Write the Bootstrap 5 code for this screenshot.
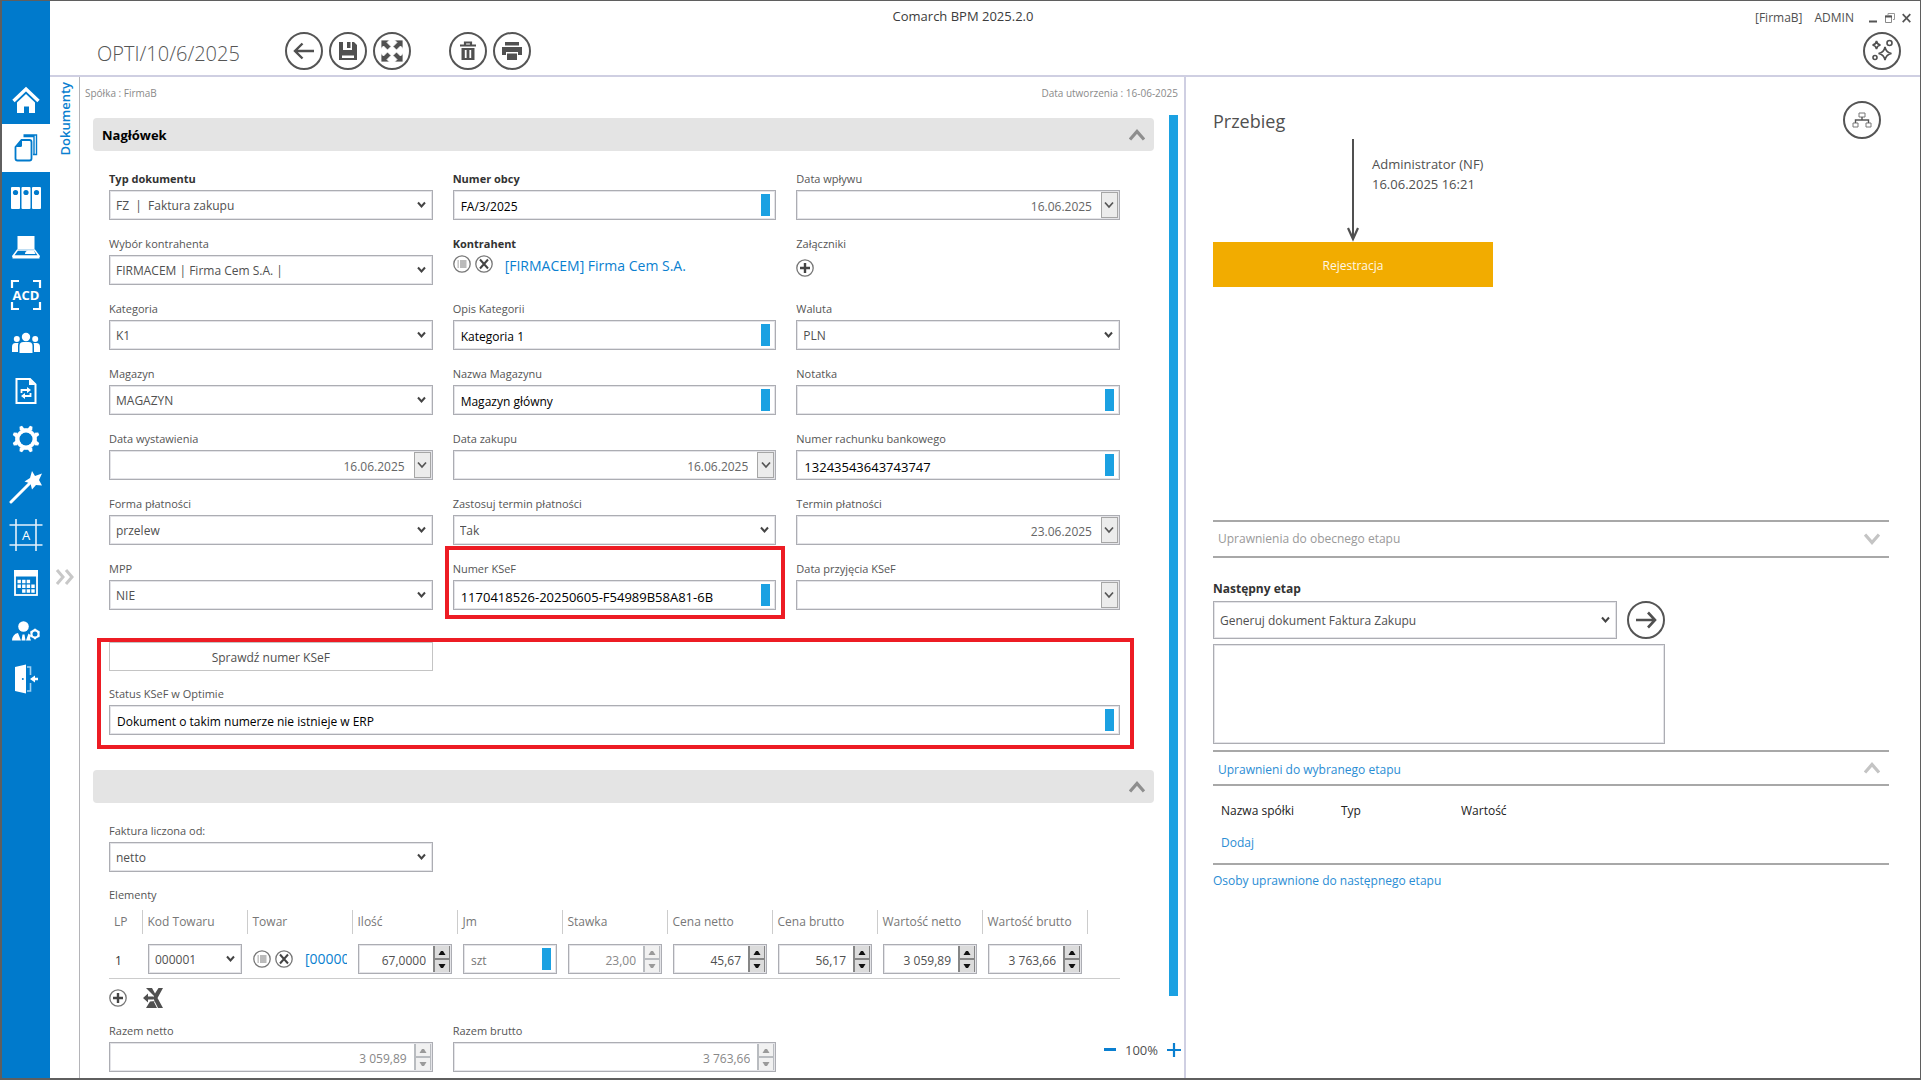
<!DOCTYPE html>
<html lang="pl">
<head>
<meta charset="utf-8">
<meta name="viewport" content="width=device-width, initial-scale=1">
<title>Comarch BPM 2025.2.0</title>
<link rel="stylesheet" href="https://cdn.jsdelivr.net/npm/bootstrap@5.3.0/dist/css/bootstrap.min.css">
<style>
  :root { --blue:#007acc; --sky:#1ba1e2; --ink:#505050; --edge:#acadb3; --rule:#cfcfe2; }
  body { font-family:"Open Sans","Noto Sans",sans-serif; font-size:12px; line-height:20px; color:var(--ink); background:#fff; }
  a { color:#2a8dd4; text-decoration:none; }
  svg { display:block; }
  .app-window { min-height:100vh; border:solid #5f5f5f; border-width:1px 1px 2px 2px; }

  /* sidebar */
  .side-nav { width:48px; background:var(--blue); padding-top:75px; }
  .side-nav a { height:48px; color:#fff; }
  .side-nav a.current { background:#fff; color:var(--blue); margin-bottom:3px; }

  /* title bar */
  .top-bar { height:76px; border-bottom:2px solid var(--rule); padding:0 9px 0 47px; }
  .app-name { padding:5px 44px 0 0; font-size:13px; color:#3c3c3c; pointer-events:none; }
  .doc-title { font-size:20px; font-weight:300; line-height:28px; color:#555; margin:0; padding-top:39px; width:188px; }
  .round-btn { width:38px; height:38px; border:2px solid #555; border-radius:50%; background:#fff; color:#505050; padding:0; display:flex; align-items:center; justify-content:center; flex:none; }
  .tool-row { padding-top:31px; gap:6px; }
  .tool-row .group-start { margin-left:32px; }
  .user-row { padding-top:7px; }
  .user-row + .round-btn { margin:4px 10px 0 auto; }
  .win-btn { border:0; background:none; padding:0; color:#555; margin-left:7px; }

  /* vertical tab strip */
  .tab-strip { width:30px; border-right:1px solid #b4b4b8; padding-top:5px; }
  .tab-strip .tab-name { writing-mode:vertical-rl; transform:rotate(180deg); color:#0a7fd0; font-size:13px; font-weight:600; }
  .tab-strip .expander { border:0; background:none; padding:0; color:#c8c8c8; margin-top:414px; }

  /* form pane */
  .form-pane { width:60%; flex:none; position:relative; }
  .flow-pane { width:40%; flex:none; border-left:2px solid var(--rule); padding:0 31px 0 27px; }
  .info-line { font-size:10px; color:#8a8a8a; padding:6px 6px 0 5px; }
  .form-scroll { padding-left:13px; }
  .section-head { height:33px; background:#e4e4e4; border:0; border-radius:4px; padding:0 9px; width:100%; color:#000; font-size:13px; font-weight:700; margin-top:7px; }
  .section-head svg { color:#8e8e8e; }
  .section-next { margin-top:35px; }
  .section-body { padding:18px 34px 0 16px; }
  .field-grid { display:grid; grid-template-columns:repeat(3,minmax(0,1fr)); column-gap:20px; row-gap:14px; }
  .fld { min-width:0; position:relative; }
  .fld > label, .cap { display:block; height:21px; line-height:20px; color:#555; font-size:11px; }
  .fld.req > label, .fld.req > .cap { font-weight:700; color:#333; }
  .box { height:30px; width:100%; border:1px solid var(--edge); border-radius:0; background-color:#fff; color:var(--ink); font-size:12px; line-height:20px; padding:0 6px; outline:1px solid #e4e4e8; outline-offset:-2px; }
  select.box { appearance:none; padding:1px 6px 0; background:#fff url("data:image/svg+xml,%3Csvg xmlns='http://www.w3.org/2000/svg' width='9' height='8'%3E%3Cpath d='M1 1.5l3.500 4 3.500-4' fill='none' stroke='%23444' stroke-width='2'/%3E%3C/svg%3E") no-repeat right 6px center; }
  .txt { position:relative; }
  .txt .box { color:#000; padding:3px 20px 0 7px; }
  .txt .box.digits { font-size:13px; }
  .txt::after { content:""; position:absolute; right:6px; top:4px; width:9px; height:22px; background:var(--sky); }
  .txt.dim .box { color:#777; }
  .date-box { display:flex; border:1px solid var(--edge); height:30px; padding:1px; outline:1px solid #e4e4e8; outline-offset:-2px; }
  .date-box input { flex:1; min-width:0; border:0; text-align:right; color:#666; padding:3px 9px 0 6px; font-size:12px; background:none; }
  .date-box button { width:17px; border:1px solid #a6a6a6; background:#ececec; padding:0; color:#555; display:flex; align-items:center; justify-content:center; }
  .num-box { display:flex; border:1px solid var(--edge); height:30px; outline:1px solid #e4e4e8; outline-offset:-2px; }
  .num-box input { flex:1; min-width:0; width:0; border:0; text-align:right; color:var(--ink); padding:3px 7px 0 0; font-size:12px; background:none; }
  .num-box span { width:18px; display:flex; flex-direction:column; background:#868686; padding:1px 2px; gap:2px; }
  .num-box button { flex:1; border:0; background:#dcdcdc; padding:0; color:#111; display:flex; align-items:center; justify-content:center; }
  .num-box.off span { background:#b9bcc0; }
  .num-box.off button { background:#f1f1f1; color:#9a9a9a; }
  .num-box.off input { color:#888; }
  .mini { border:0; background:none; padding:0; color:#777; }
  .fld.req > .cap.near { height:18px; }
  .cp-link { color:#0a7fd0; font-size:14px; font-weight:500; white-space:nowrap; overflow:hidden; }
  .frame-red { position:absolute; border:4px solid #ed1c24; pointer-events:none; }
  .frame-a { inset:-13px -9px -9px -8px; }
  .frame-b { inset:-4px -14px -14px -12px; }
  .check-btn { height:29px; border:1px solid #c4c4c4; background:#fff; color:var(--ink); padding:3px 0 0; width:100%; font-size:12px; }
  .status-block { position:relative; margin-top:32px; }
  .status-block .fld { margin-top:13px; }

  .lines-table { width:100%; table-layout:fixed; border-collapse:collapse; border-bottom:1px solid #ccc; }
  .lines-table th { font-weight:400; color:#777; height:24px; padding:0 0 0 5px; border-right:1px solid #ccc; white-space:nowrap; }
  .lines-table th:last-child { border:0; }
  .lines-table td { padding:10px 5px 4px 6px; height:44px; }
  .lines-table td.lp { color:#333; padding-top:14px; }
  .list-cap { padding-top:13px; }
  .row-tools { margin-top:9px; }
  .totals { margin-top:13px; }
  .scroll-bar { width:9px; height:881px; background:var(--sky); margin:4px 6px 0 15px; flex:none; }
  .zoom-tool { position:absolute; right:3px; bottom:18px; gap:9px; font-size:13px; }
  .zoom-tool button { border:0; background:none; padding:0; color:#0a7fd0; }

  /* workflow pane */
  .flow-title { font-size:18px; font-weight:400; line-height:24px; margin:0; }
  .flow-step { padding-left:134px; gap:13px; }
  .flow-who { font-size:13px; padding-top:15px; }
  .stage { width:280px; height:45px; line-height:47px; background:#f2ac00; color:#fff8e6; text-align:center; }
  .fold { border:solid #a8a8a8; border-width:2px 0; background:none; width:100%; padding:0 9px 0 5px; font-size:12px; }
  .fold svg { color:#c4c4c4; }
  .fold-off { height:38px; color:#999; margin-top:233px; }
  .fold-on { height:36px; color:#2a8dd4; margin-top:6px; }
  .fold-on span { padding-top:3px; }
  .next-label { margin-top:21px; color:#333; }
  .next-row { gap:10px; margin-top:2px; }
  .next-row select.box { width:404px; height:38px; padding-top:2px; }
  .note-area { width:452px; height:100px; margin-top:5px; resize:none; }
  .perm { font-size:12px; color:#222; border-bottom:2px solid #a8a8a8; padding:14px 8px 10px; }
  .perm th { font-weight:400; width:120px; padding:0; height:22px; }
  .perm td { padding:11px 0 0; height:31px; }
  .people-link { margin-top:6px; }
</style>
<script src="https://cdn.jsdelivr.net/npm/bootstrap@5.3.0/dist/js/bootstrap.bundle.min.js"></script>
</head>
<body>
<svg width="0" height="0" class="position-absolute" aria-hidden="true">
  <defs>
    <symbol id="i-up" viewBox="0 0 16 12"><path d="M1 10.500 8 2.500l7 8" fill="none" stroke="currentColor" stroke-width="3.200"/></symbol>
    <symbol id="i-down" viewBox="0 0 16 12"><path d="M1 1.500l7 8 7-8" fill="none" stroke="currentColor" stroke-width="3.200"/></symbol>
    <symbol id="i-cal" viewBox="0 0 10 8"><path d="M1 1.500l4 4.500 4-4.500" fill="none" stroke="currentColor" stroke-width="1.700"/></symbol>
    <symbol id="i-tu" viewBox="0 0 8 5"><path d="M.5 5 3 1h2l2.500 4z" fill="currentColor"/></symbol>
    <symbol id="i-td" viewBox="0 0 8 5"><path d="M.5 0 3 4h2L7.500 0z" fill="currentColor"/></symbol>
    <symbol id="i-list" viewBox="0 0 18 18"><circle cx="9" cy="9" r="8.200" fill="none" stroke="currentColor" stroke-width="1.300"/><path d="M4.500 6h1.300M7 6h6.500M4.500 8h1.300M7 8h6.500M4.500 10h1.300M7 10h6.500M4.500 12h1.300M7 12h6.500" stroke="currentColor"/></symbol>
    <symbol id="i-x" viewBox="0 0 18 18"><circle cx="9" cy="9" r="8.200" fill="none" stroke="currentColor" stroke-width="1.300"/><path d="M5 4.500l8 9M13 4.500l-8 9" stroke="#444" stroke-width="2"/></symbol>
    <symbol id="i-plus" viewBox="0 0 18 18"><circle cx="9" cy="9" r="8.200" fill="none" stroke="currentColor" stroke-width="1.300"/><path d="M9 4v10M4 9h10" stroke="#444" stroke-width="2.400"/></symbol>
  </defs>
</svg>

<div class="app-window d-flex">
  <nav class="side-nav flex-shrink-0 d-flex flex-column" aria-label="Menu">
    <a href="#" class="d-flex align-items-center justify-content-center" aria-label="Start"><svg width="28" height="28" viewBox="0 0 28 28"><path d="M1.500 15 14 3l12.500 12" fill="none" stroke="#fff" stroke-width="3.400"/><path d="M5 16.500 14 8l9 8.500V27h-6v-6.500h-5V27H5z" fill="#fff"/></svg></a>
    <a href="#" class="current d-flex align-items-center justify-content-center" aria-label="Dokumenty"><svg width="24" height="28" viewBox="0 0 24 28"><path d="M7.500 6h8q2 0 2 2v16.500q0 2-2 2h-12q-2 0-2-2V13z" fill="none" stroke="currentColor" stroke-width="1.800"/><path d="M2 13l6-7v5.500q0 1.500-1.500 1.500z" fill="currentColor"/><path d="M9.500 2.500h10.500v17.500M9.500 1h13v19.500h-3.500" fill="none" stroke="currentColor" stroke-width="1.400"/></svg></a>
    <a href="#" class="d-flex align-items-center justify-content-center" aria-label="Archiwum"><svg width="30" height="24" viewBox="0 0 30 24"><g fill="#fff"><rect x="0" y="0" width="9" height="22" rx="1"/><rect x="10.500" y="0" width="9" height="22" rx="1"/><rect x="21" y="0" width="9" height="22" rx="1"/></g><g fill="#007acc"><circle cx="4.500" cy="5.500" r="2.600"/><circle cx="15" cy="5.500" r="2.600"/><circle cx="25.500" cy="5.500" r="2.600"/></g></svg></a>
    <a href="#" class="d-flex align-items-center justify-content-center" aria-label="Stanowisko"><svg width="28" height="24" viewBox="0 0 28 24"><rect x="5.500" y="1" width="17" height="13" fill="#fff"/><path d="M5.500 15h17l4.500 6H1z" fill="none" stroke="#fff" stroke-width="1.500"/><path d="M16 15.500h6l1.500 3.500H13q0-3 3-3.500z" fill="#fff"/><path d="M.5 21h27v2.500H.5z" fill="#fff"/></svg></a>
    <a href="#" class="d-flex align-items-center justify-content-center" aria-label="ACD"><svg width="32" height="32" viewBox="0 0 32 32"><path d="M2 9V2h7M23 2h7v7M30 23v7h-7M9 30H2v-7" fill="none" stroke="#fff" stroke-width="2.200"/><text x="16" y="21" text-anchor="middle" font-family="Open Sans" font-weight="700" font-size="13" fill="#fff">ACD</text></svg></a>
    <a href="#" class="d-flex align-items-center justify-content-center" aria-label="Zespoły"><svg width="28" height="22" viewBox="0 0 28 22"><g fill="#fff"><circle cx="14" cy="5" r="4.200"/><circle cx="4.800" cy="7" r="3"/><circle cx="23.200" cy="7" r="3"/><path d="M7.500 21V14q0-4 4-4h5q4 0 4 4v7z"/><path d="M0 20v-5q0-4 3.500-4H6.500q-.5 1-.5 3v6zM28 20v-5q0-4-3.500-4h-3q.5 1 .5 3v6z"/></g></svg></a>
    <a href="#" class="d-flex align-items-center justify-content-center" aria-label="Wymiana"><svg width="22" height="28" viewBox="0 0 22 28"><path d="M1.500 2H15l5.500 5.500V26H1.500z" fill="none" stroke="#fff" stroke-width="2"/><path d="M14 2v6h6z" fill="#fff"/><path d="M6.500 16v-3H13M15.500 16v3H9" fill="none" stroke="#fff" stroke-width="1.800"/><path d="M12 10l4 3-4 3zM10 16l-4 3 4 3z" fill="#fff"/></svg></a>
    <a href="#" class="d-flex align-items-center justify-content-center" aria-label="Ustawienia"><svg width="28" height="28" viewBox="0 0 28 28"><circle cx="14" cy="14" r="8.200" fill="none" stroke="#fff" stroke-width="4.200"/><g fill="#fff"><path d="M7.800 5.500 7.500 1.800 10 .8l2 2.400h4l2-2.400 2.500 1-.3 3.700z"/><path d="M7.800 22.500l-.3 3.700 2.500 1 2-2.400h4l2 2.400 2.500-1-.3-3.700z"/><path d="M5.500 7.800l-3.700-.3L.8 10l2.400 2v4L.8 18l1 2.500 3.700-.3zM22.500 7.800l3.700-.3 1 2.500-2.400 2v4l2.400 2-1 2.500-3.700-.3z"/></g><circle cx="14" cy="14" r="6.500" fill="#007acc"/></svg></a>
    <a href="#" class="d-flex align-items-center justify-content-center" aria-label="Kreator"><svg width="34" height="34" viewBox="0 0 34 34"><path d="M2 32 22 12" stroke="#fff" stroke-width="3" stroke-linecap="round"/><path d="M23 1l3 5 7-2.500-3 6.500 3 5.500-6-.5-4 4.500-1.500-6-6-2 5.500-3.500z" fill="#fff"/></svg></a>
    <a href="#" class="d-flex align-items-center justify-content-center" aria-label="Szablony"><svg width="34" height="34" viewBox="0 0 34 34"><path d="M7 1v32M27 1v32M.5 7h33M.5 27h33" stroke="#e4f1fb" stroke-width="1.600"/><text x="17" y="22" text-anchor="middle" font-family="Open Sans" font-size="13" fill="#fff">A</text></svg></a>
    <a href="#" class="d-flex align-items-center justify-content-center" aria-label="Kalendarz"><svg width="26" height="28" viewBox="0 0 26 28"><rect x="2" y="2" width="22" height="24" fill="none" stroke="#fff" stroke-width="1.800"/><rect x="1" y="1" width="24" height="6.500" fill="#fff"/><path d="M4.500 12.500h13.500M4.500 17.200h17.500M9.100 22h13" stroke="#fff" stroke-width="3.400" stroke-dasharray="3.400 1.200"/></svg></a>
    <a href="#" class="d-flex align-items-center justify-content-center" aria-label="Operatorzy"><svg width="28" height="20" viewBox="0 0 28 20"><g fill="#fff"><circle cx="11.500" cy="5.500" r="5.300"/><path d="M0 19.500q.5-6.500 6-7.500l3 7.500zM10.500 13.500h2l1 6h-4zM14 19.500l2.500-7 2.500 2-1 2.500 1 2.500z"/></g><circle cx="23" cy="13" r="3.600" fill="none" stroke="#fff" stroke-width="2.200"/><path d="M23 7.800v2M23 16.200v2M18.500 10.400l1.700 1M25.800 14.600l1.700 1M18.500 15.600l1.700-1M25.800 11.400l1.700-1" stroke="#fff" stroke-width="2"/></svg></a>
    <a href="#" class="d-flex align-items-center justify-content-center" aria-label="Wyloguj"><svg width="26" height="30" viewBox="0 0 26 30"><path d="M2 3l11-2.500v29L2 27z" fill="#fff"/><path d="M14 3h3.500v8M17.500 19v8H14" fill="none" stroke="#9fd0f2" stroke-width="1.600"/><path d="M17 15l5-3.500v2.300h3v2.400h-3v2.300z" fill="#fff"/><circle cx="9.800" cy="15" r="1" fill="#007acc"/></svg></a>
  </nav>

  <div class="flex-fill d-flex flex-column">
    <header class="top-bar d-flex position-relative">
      <h1 class="doc-title">OPTI/10/6/2025</h1>
      <div class="tool-row d-flex">
        <button class="round-btn" aria-label="Wstecz"><svg width="22" height="20" viewBox="0 0 22 20"><path d="M21 10H2M9.500 2.500 2 10l7.500 7.500" fill="none" stroke="currentColor" stroke-width="2.400"/></svg></button>
        <button class="round-btn" aria-label="Zapisz"><svg width="18" height="20" viewBox="0 0 18 20"><path d="M0 1h4v8h9V1h2l3 3v15H0z" fill="currentColor"/><rect x="8" y="1" width="3.500" height="6" fill="currentColor"/><rect x="3" y="14.500" width="12" height="2.500" fill="#fff"/></svg></button>
        <button class="round-btn" aria-label="Pełny ekran"><svg width="26" height="26" viewBox="0 0 26 26"><path d="M2 2h8.500L8 4.500l4 4L8.500 12l-4-4L2 10.500zM24 2v8.500L21.500 8l-4 4L14 8.500l4-4L15.500 2zM2 24v-8.500L4.500 18l4-4 3.500 3.500-4 4 2.500 2.500zM24 24h-8.500l2.500-2.500-4-4 3.500-3.500 4 4 2.500-2.500z" fill="currentColor" stroke="#fff" stroke-width=".8"/></svg></button>
        <button class="round-btn group-start" aria-label="Usuń"><svg width="18" height="20" viewBox="0 0 18 20"><path d="M1 4.500h16M6 4V1.500h6V4" fill="none" stroke="currentColor" stroke-width="2.200"/><path d="M2.500 7h13v12h-13z" fill="currentColor"/><path d="M6.700 9v8M11.300 9v8" stroke="#fff" stroke-width="1.800"/></svg></button>
        <button class="round-btn" aria-label="Drukuj"><svg width="22" height="20" viewBox="0 0 22 20"><path d="M4 1h14v3.500H4zM1 6h20v8h-4v-3H5v3H1zM6 12.500h10V19H6z" fill="currentColor"/></svg></button>
      </div>
      <div class="app-name position-absolute top-0 start-0 end-0 text-center">Comarch BPM 2025.2.0</div>
      <div class="ms-auto">
        <div class="user-row d-flex align-items-center">
          <span>[FirmaB]</span><span class="ms-2 ps-1 me-2">ADMIN</span>
          <button class="win-btn" aria-label="Minimalizuj"><svg width="9" height="12" viewBox="0 0 9 12"><path d="M0 9.500h8" stroke="currentColor" stroke-width="2"/></svg></button>
          <button class="win-btn" aria-label="Przywróć"><svg width="10" height="12" viewBox="0 0 10 12"><path d="M3 3V1.500h6.500v6H8" fill="none" stroke="#999"/><path d="M.5 4h6v6.500h-6z" fill="none" stroke="#888"/><path d="M0 4.500h7" stroke="#555" stroke-width="2"/></svg></button>
          <button class="win-btn" aria-label="Zamknij"><svg width="9" height="12" viewBox="0 0 9 12"><path d="M.7 2.200l7.600 8M8.300 2.200l-7.600 8" stroke="currentColor" stroke-width="1.700"/></svg></button>
        </div>
        <button class="round-btn" aria-label="Asystent"><svg width="24" height="24" viewBox="0 0 24 24"><g fill="none" stroke="currentColor" stroke-width="1.600"><path d="M15 8q1 5.500 6.500 6.500Q16 15.500 15 21q-1-5.500-6.500-6.500Q14 13.500 15 8zM6.500 2q.6 3.500 4 4-3.400.500-4 4-.6-3.500-4-4 3.400-.5 4-4z"/><circle cx="19.500" cy="4" r="2.500"/><circle cx="5" cy="18.500" r="2"/></g></svg></button>
      </div>
    </header>

    <div class="flex-grow-1 d-flex">
      <div class="tab-strip flex-shrink-0 d-flex flex-column align-items-center">
        <span class="tab-name">Dokumenty</span>
        <button class="expander" aria-label="Rozwiń"><svg width="20" height="16" viewBox="0 0 20 16"><path d="M2 1l6 7-6 7M11 1l6 7-6 7" fill="none" stroke="currentColor" stroke-width="3"/></svg></button>
      </div>

      <div class="flex-fill d-flex">
      <main class="form-pane">
        <div class="info-line d-flex justify-content-between"><span>Spółka : FirmaB</span><span>Data utworzenia : 16-06-2025</span></div>
        <div class="d-flex align-items-start pt-1 mt-1">
          <div class="form-scroll flex-fill">
            <button class="section-head d-flex align-items-center justify-content-between"><span>Nagłówek</span><svg width="16" height="12"><use href="#i-up"/></svg></button>
            <div class="section-body">
              <div class="field-grid">
                <div class="fld req"><label for="typ">Typ dokumentu</label><select id="typ" class="box"><option>FZ&nbsp; |&nbsp; Faktura zakupu</option></select></div>
                <div class="fld req"><label for="obcy">Numer obcy</label><div class="txt"><input id="obcy" class="box" value="FA/3/2025"></div></div>
                <div class="fld"><label for="wplyw">Data wpływu</label><div class="date-box"><input id="wplyw" value="16.06.2025"><button aria-label="Kalendarz"><svg width="10" height="8"><use href="#i-cal"/></svg></button></div></div>

                <div class="fld"><label for="wybor">Wybór kontrahenta</label><select id="wybor" class="box"><option>FIRMACEM | Firma Cem S.A. |</option></select></div>
                <div class="fld req"><span class="cap near">Kontrahent</span><div class="d-flex gap-1"><button class="mini" aria-label="Lista"><svg width="18" height="18"><use href="#i-list"/></svg></button><button class="mini" aria-label="Wyczyść"><svg width="18" height="18"><use href="#i-x"/></svg></button><a href="#" class="cp-link ms-2 pt-1">[FIRMACEM] Firma Cem S.A.</a></div></div>
                <div class="fld"><span class="cap">Załączniki</span><button class="mini pt-1" aria-label="Dodaj załącznik"><svg width="18" height="18"><use href="#i-plus"/></svg></button></div>

                <div class="fld"><label for="kat">Kategoria</label><select id="kat" class="box"><option>K1</option></select></div>
                <div class="fld"><label for="opis">Opis Kategorii</label><div class="txt"><input id="opis" class="box" value="Kategoria 1"></div></div>
                <div class="fld"><label for="wal">Waluta</label><select id="wal" class="box"><option>PLN</option></select></div>

                <div class="fld"><label for="mag">Magazyn</label><select id="mag" class="box"><option>MAGAZYN</option></select></div>
                <div class="fld"><label for="nmag">Nazwa Magazynu</label><div class="txt"><input id="nmag" class="box" value="Magazyn główny"></div></div>
                <div class="fld"><label for="not">Notatka</label><div class="txt"><input id="not" class="box"></div></div>

                <div class="fld"><label for="wyst">Data wystawienia</label><div class="date-box"><input id="wyst" value="16.06.2025"><button aria-label="Kalendarz"><svg width="10" height="8"><use href="#i-cal"/></svg></button></div></div>
                <div class="fld"><label for="zak">Data zakupu</label><div class="date-box"><input id="zak" value="16.06.2025"><button aria-label="Kalendarz"><svg width="10" height="8"><use href="#i-cal"/></svg></button></div></div>
                <div class="fld"><label for="rach">Numer rachunku bankowego</label><div class="txt"><input id="rach" class="box digits" value="13243543643743747"></div></div>

                <div class="fld"><label for="forma">Forma płatności</label><select id="forma" class="box"><option>przelew</option></select></div>
                <div class="fld"><label for="zast">Zastosuj termin płatności</label><select id="zast" class="box"><option>Tak</option></select></div>
                <div class="fld"><label for="term">Termin płatności</label><div class="date-box"><input id="term" value="23.06.2025"><button aria-label="Kalendarz"><svg width="10" height="8"><use href="#i-cal"/></svg></button></div></div>

                <div class="fld"><label for="mpp">MPP</label><select id="mpp" class="box"><option>NIE</option></select></div>
                <div class="fld"><label for="ksef">Numer KSeF</label><div class="txt"><input id="ksef" class="box digits" value="1170418526-20250605-F54989B58A81-6B"></div><div class="frame-red frame-a"></div></div>
                <div class="fld"><label for="przyj">Data przyjęcia KSeF</label><div class="date-box"><input id="przyj"><button aria-label="Kalendarz"><svg width="10" height="8"><use href="#i-cal"/></svg></button></div></div>
              </div>

              <div class="status-block">
                <div class="field-grid"><button class="check-btn">Sprawdź numer KSeF</button></div>
                <div class="fld"><label for="stat">Status KSeF w Optimie</label><div class="txt"><input id="stat" class="box" value="Dokument o takim numerze nie istnieje w ERP"></div></div>
                <div class="frame-red frame-b"></div>
              </div>
            </div>

            <button class="section-head section-next d-flex align-items-center justify-content-end" aria-label="Pozycje"><svg width="16" height="12"><use href="#i-up"/></svg></button>
            <div class="section-body">
              <div class="field-grid">
                <div class="fld"><label for="licz">Faktura liczona od:</label><select id="licz" class="box"><option>netto</option></select></div>
              </div>
              <div class="list-cap"><span class="cap">Elementy</span></div>
              <table class="lines-table mt-1">
                <colgroup><col style="width:33px"><col style="width:105px"><col style="width:105px"><col style="width:105px"><col style="width:105px"><col style="width:105px"><col style="width:105px"><col style="width:105px"><col style="width:105px"><col style="width:105px"><col></colgroup>
                <thead><tr><th>LP</th><th>Kod Towaru</th><th>Towar</th><th>Ilość</th><th>Jm</th><th>Stawka</th><th>Cena netto</th><th>Cena brutto</th><th>Wartość netto</th><th>Wartość brutto</th><th></th></tr></thead>
                <tbody><tr>
                  <td class="lp">1</td>
                  <td><select class="box" aria-label="Kod Towaru"><option>000001</option></select></td>
                  <td><div class="d-flex gap-1 align-items-center overflow-hidden"><button class="mini flex-shrink-0" aria-label="Lista"><svg width="18" height="18"><use href="#i-list"/></svg></button><button class="mini flex-shrink-0" aria-label="Wyczyść"><svg width="18" height="18"><use href="#i-x"/></svg></button><a href="#" class="cp-link ms-2">[000001]</a></div></td>
                  <td><div class="num-box"><input aria-label="Ilość" value="67,0000"><span><button aria-label="Więcej"><svg width="8" height="5"><use href="#i-tu"/></svg></button><button aria-label="Mniej"><svg width="8" height="5"><use href="#i-td"/></svg></button></span></div></td>
                  <td><div class="txt dim"><input class="box" aria-label="Jm" value="szt"></div></td>
                  <td><div class="num-box off"><input aria-label="Stawka" value="23,00"><span><button aria-label="Więcej"><svg width="8" height="5"><use href="#i-tu"/></svg></button><button aria-label="Mniej"><svg width="8" height="5"><use href="#i-td"/></svg></button></span></div></td>
                  <td><div class="num-box"><input aria-label="Cena netto" value="45,67"><span><button aria-label="Więcej"><svg width="8" height="5"><use href="#i-tu"/></svg></button><button aria-label="Mniej"><svg width="8" height="5"><use href="#i-td"/></svg></button></span></div></td>
                  <td><div class="num-box"><input aria-label="Cena brutto" value="56,17"><span><button aria-label="Więcej"><svg width="8" height="5"><use href="#i-tu"/></svg></button><button aria-label="Mniej"><svg width="8" height="5"><use href="#i-td"/></svg></button></span></div></td>
                  <td><div class="num-box"><input aria-label="Wartość netto" value="3 059,89"><span><button aria-label="Więcej"><svg width="8" height="5"><use href="#i-tu"/></svg></button><button aria-label="Mniej"><svg width="8" height="5"><use href="#i-td"/></svg></button></span></div></td>
                  <td><div class="num-box"><input aria-label="Wartość brutto" value="3 763,66"><span><button aria-label="Więcej"><svg width="8" height="5"><use href="#i-tu"/></svg></button><button aria-label="Mniej"><svg width="8" height="5"><use href="#i-td"/></svg></button></span></div></td>
                  <td></td>
                </tr></tbody>
              </table>
              <div class="row-tools d-flex align-items-center gap-3">
                <button class="mini" aria-label="Dodaj pozycję"><svg width="18" height="18"><use href="#i-plus"/></svg></button>
                <button class="mini" aria-label="Importuj z arkusza"><svg width="20" height="20" viewBox="0 0 20 20"><path d="M3 0h6l3 5.500L15.500 0H20l-5.500 10L20 20h-5l-4-8-1.500-2L11 8zM12 13l-1 1 3 6H3l4-6.500z" fill="#505050"/><path d="M0 10l5-4.500v3h5v3H5v3z" fill="#505050"/></svg></button>
              </div>
              <div class="field-grid totals">
                <div class="fld"><label for="rn">Razem netto</label><div class="num-box off"><input id="rn" value="3 059,89"><span><button aria-label="Więcej"><svg width="8" height="5"><use href="#i-tu"/></svg></button><button aria-label="Mniej"><svg width="8" height="5"><use href="#i-td"/></svg></button></span></div></div>
                <div class="fld"><label for="rb">Razem brutto</label><div class="num-box off"><input id="rb" value="3 763,66"><span><button aria-label="Więcej"><svg width="8" height="5"><use href="#i-tu"/></svg></button><button aria-label="Mniej"><svg width="8" height="5"><use href="#i-td"/></svg></button></span></div></div>
              </div>
            </div>
          </div>
          <div class="scroll-bar"></div>
        </div>
        <div class="zoom-tool d-flex align-items-center">
          <button aria-label="Pomniejsz"><svg width="12" height="14" viewBox="0 0 12 14"><path d="M0 6.500h12" stroke="currentColor" stroke-width="3"/></svg></button>
          <span>100%</span>
          <button aria-label="Powiększ"><svg width="14" height="14" viewBox="0 0 14 14"><path d="M0 7h14M7 0v14" stroke="currentColor" stroke-width="2.200"/></svg></button>
        </div>
      </main>

      <aside class="flow-pane">
        <div class="d-flex justify-content-between pt-4 pe-2"><h2 class="flow-title pt-2">Przebieg</h2>
          <button class="round-btn" aria-label="Schemat"><svg width="20" height="16" viewBox="0 0 20 16"><path d="M7 1h6v4H7zM1 11h5v4H1zM14 11h5v4h-5z" fill="none" stroke="#777"/><path d="M10 5v3M3.500 11V8h13v3" fill="none" stroke="#555" stroke-width="1.400"/></svg></button></div>
        <div class="flow-step d-flex">
          <svg width="12" height="103" viewBox="0 0 12 103"><path d="M6 0v100" stroke="#505050" stroke-width="2"/><path d="M1 89l5 11 5-11" fill="none" stroke="#505050" stroke-width="2.200"/></svg>
          <div class="flow-who">Administrator (NF)<br>16.06.2025 16:21</div>
        </div>
        <div class="stage">Rejestracja</div>
        <button class="fold fold-off d-flex align-items-center justify-content-between"><span>Uprawnienia do obecnego etapu</span><svg width="16" height="12"><use href="#i-down"/></svg></button>
        <label for="nast" class="next-label fw-bold d-block">Następny etap</label>
        <div class="next-row d-flex"><select id="nast" class="box"><option>Generuj dokument Faktura Zakupu</option></select>
          <button class="round-btn" aria-label="Dalej"><svg width="22" height="18" viewBox="0 0 22 18"><path d="M1 9h19M13 1.500 20 9l-7 7.500" fill="none" stroke="currentColor" stroke-width="2.600"/></svg></button></div>
        <textarea class="box note-area d-block" aria-label="Komentarz"></textarea>
        <button class="fold fold-on d-flex align-items-center justify-content-between"><span>Uprawnieni do wybranego etapu</span><svg width="16" height="12"><use href="#i-up"/></svg></button>
        <div class="perm"><table><thead><tr><th>Nazwa spółki</th><th>Typ</th><th>Wartość</th></tr></thead><tbody><tr><td colspan="3"><a href="#">Dodaj</a></td></tr></tbody></table></div>
        <a href="#" class="people-link d-inline-block">Osoby uprawnione do następnego etapu</a>
      </aside>
      </div>
    </div>
  </div>
</div>
</body>
</html>
